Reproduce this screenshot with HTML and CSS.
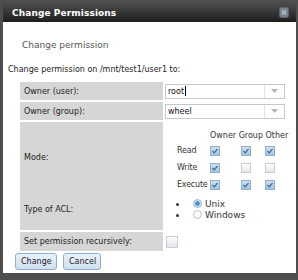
FILE: index.html
```html
<!DOCTYPE html>
<html>
<head>
<meta charset="utf-8">
<link rel="stylesheet" href="styles.css">
</head>
<body>
<div class="dialog">
  <div class="titlebar">
    <span class="title">Change Permissions</span>
    <svg class="close" width="10" height="11" viewBox="0 0 10 11">
      <rect x="0.5" y="0.5" width="9" height="10" rx="2" fill="#7a8592" stroke="#5b6470"/>
      <path d="M3 3.5 L7 7.5 M7 3.5 L3 7.5" stroke="#b8c2cc" stroke-width="1.2"/>
    </svg>
  </div>
  <div class="content">
    <div class="subtitle">Change permission</div>
    <div class="intro">Change permission on /mnt/test1/user1 to:</div>
    <div class="form">
      <div class="row r1">
        <div class="label">Owner (user):</div>
        <div class="value">
          <div class="select"><span class="sel-text">root<span class="caret"></span></span><span class="arrow"><svg width="7" height="4" viewBox="0 0 7 4"><path d="M0 0 L7 0 L3.5 4 Z" fill="#b0b4b8"/></svg></span></div>
        </div>
      </div>
      <div class="row r2">
        <div class="label">Owner (group):</div>
        <div class="value">
          <div class="select"><span class="sel-text">wheel</span><span class="arrow"><svg width="7" height="4" viewBox="0 0 7 4"><path d="M0 0 L7 0 L3.5 4 Z" fill="#b0b4b8"/></svg></span></div>
        </div>
      </div>
      <div class="row r3">
        <div class="label">Mode:</div>
        <div class="value">
          <div class="mode">
            <span></span><span class="hd">Owner Group Other</span>
            <span class="ml">Read</span><span class="cb on"></span><span class="cb on"></span><span class="cb on"></span>
            <span class="ml">Write</span><span class="cb on"></span><span class="cb"></span><span class="cb"></span>
            <span class="ml">Execute</span><span class="cb on"></span><span class="cb on"></span><span class="cb on"></span>
          </div>
        </div>
      </div>
      <div class="row r4">
        <div class="label">Type of ACL:</div>
        <div class="value">
          <ul class="radios">
            <li><span class="radio on"></span>Unix</li>
            <li><span class="radio"></span>Windows</li>
          </ul>
        </div>
      </div>
      <div class="row r5">
        <div class="label">Set permission recursively:</div>
        <div class="value"><span class="cb big"></span></div>
      </div>
    </div>
    <div class="buttons">
      <button class="btn">Change</button>
      <button class="btn">Cancel</button>
    </div>
  </div>
</div>
</body>
</html>
```
FILE: styles.css
```css
html, body {
  margin: 0;
  padding: 0;
}
body {
  width: 298px;
  height: 280px;
  overflow: hidden;
  background: #4e4e4e;
  font-family: "DejaVu Sans", sans-serif;
  font-size: 8px;
  color: #333;
}
.dialog {
  margin: 3px 2px 0 3px;
  height: 270px;
  background: #fff;
  display: flex;
  flex-direction: column;
}
.titlebar {
  height: 19px;
  flex: none;
  background: linear-gradient(#4c4c4c, #1e1e1e);
  display: flex;
  align-items: center;
  justify-content: space-between;
  padding: 0 7px 0 9px;
}
.title {
  color: #fff;
  font-weight: bold;
  font-size: 9px;
  letter-spacing: 0.1px;
}
.close {
  display: block;
}
.content {
  flex: 1;
  display: flex;
  flex-direction: column;
  padding: 0 0 0 5px;
}
.subtitle {
  font-size: 9px;
  color: #555;
  margin: 17px 0 0 14px;
  line-height: 12px;
}
.intro {
  margin-top: 14px;
  line-height: 10px;
  color: #222;
}
.form {
  margin: 7px 0 0 12px;
  display: flex;
  flex-direction: column;
  gap: 2px;
}
.row {
  display: grid;
  grid-template-columns: 143px 1fr;
  gap: 2px;
}
.label {
  background: #d6d6d6;
  display: flex;
  align-items: center;
  padding-left: 4px;
  color: #222;
}
.value {
  display: flex;
  align-items: center;
}
.r1, .r2 { height: 18px; }
.r3 { height: 65px; }
.r4 { height: 41px; }
.r5 { height: 19px; }
.select {
  width: 120px;
  height: 15px;
  border: 1px solid #c4c8cc;
  box-sizing: border-box;
  display: flex;
  background: #fff;
}
.sel-text {
  flex: 1;
  padding-left: 2px;
  line-height: 13px;
  color: #111;
  display: flex;
  align-items: center;
}
.caret {
  width: 1px;
  height: 10px;
  background: #000;
  margin-left: 1px;
}
.arrow {
  width: 19px;
  border-left: 1px solid #dfe2e5;
  display: flex;
  align-items: center;
  justify-content: center;
}
.arrow svg { display: block; }
.mode {
  display: grid;
  grid-template-columns: 33px 30px 24px 24px;
  grid-template-rows: 13px 17px 17px 17px;
  margin-left: 12px;
  margin-top: 7px;
  align-items: center;
  justify-items: start;
}
.hd {
  color: #333;
  grid-column: 2 / 5;
  white-space: nowrap;
}
.ml { color: #333; letter-spacing: -0.2px; }
.cb {
  width: 10px;
  height: 10px;
  box-sizing: border-box;
  border: 1px solid #c8ccd0;
  background: linear-gradient(#fdfdfd, #e4e8ec);
  display: block;
}
.cb.on {
  border-color: #8eb0cc;
  background-color: #b8d0e6;
  background-image: url("data:image/svg+xml;utf8,<svg xmlns='http://www.w3.org/2000/svg' width='8' height='8' viewBox='0 0 8 8'><path d='M1.5 4 L3.2 5.8 L6.5 2' fill='none' stroke='%233a6a98' stroke-width='1.2'/></svg>"), linear-gradient(#cfe0f0, #a6c4e0);
  background-repeat: no-repeat;
}
.mode .cb:nth-child(4n+1) { margin-left: 1px; }
.mode .cb:nth-child(4n+2) { margin-left: 1px; }
.cb.big {
  width: 12px;
  height: 12px;
  margin-left: 1px;
  border-color: #c8ccd8;
}
.radios {
  list-style: disc;
  margin: 0;
  padding: 0 0 0 23px;
  color: #333;
  font-size: 9px;
}
.radios li {
  height: 11px;
  line-height: 11px;
  display: list-item;
}
.radio {
  display: inline-block;
  width: 9px;
  height: 9px;
  border-radius: 50%;
  border: 1px solid #c0c4c8;
  box-sizing: border-box;
  background: #fafafa;
  margin: 0 3px 0 5px;
  vertical-align: -1px;
}
.radio.on {
  border-color: #9ab8d4;
  background: radial-gradient(circle, #4f8fc8 0 2px, #d4e4f2 2.5px);
}
.buttons {
  display: flex;
  gap: 6px;
  margin: 2px 0 0 7px;
}
.btn {
  font-family: "DejaVu Sans", sans-serif;
  font-size: 8px;
  color: #222;
  height: 17px;
  padding: 0 5px;
  border: 1px solid #8fb0d0;
  border-radius: 3px;
  background: linear-gradient(#eaf2fa, #cfe0f0);
}
.btn:first-child { width: 42px; }
.btn:last-child { width: 38px; }
```
